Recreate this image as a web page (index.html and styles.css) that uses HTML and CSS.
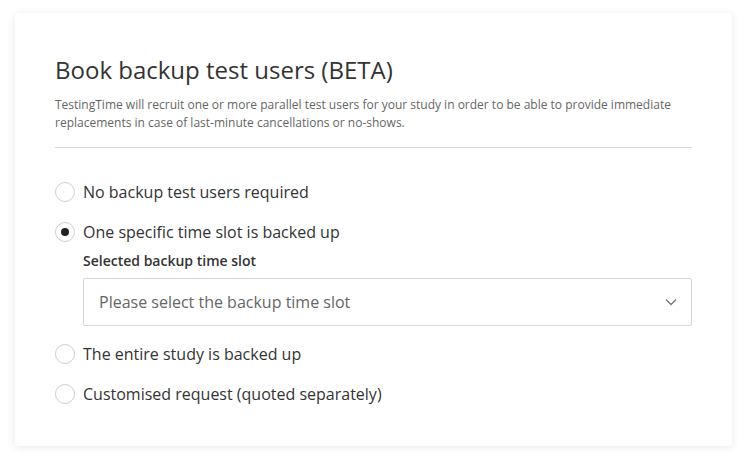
FILE: index.html
```html
<!DOCTYPE html>
<html>
<head>
<meta charset="utf-8">
<link rel="stylesheet" href="styles.css">
</head>
<body>
<div class="card">
  <h1 class="title">Book backup test users (BETA)</h1>
  <p class="desc">TestingTime will recruit one or more parallel test users for your study in order to be able to provide immediate replacements in case of last-minute cancellations or no-shows.</p>
  <hr class="divider">
  <div class="options">
    <label class="option"><span class="radio"></span><span class="label">No backup test users required</span></label>
    <label class="option"><span class="radio checked"></span><span class="label">One specific time slot is backed up</span></label>
    <div class="sub">
      <div class="sub-label">Selected backup time slot</div>
      <div class="select">
        <span class="placeholder">Please select the backup time slot</span>
        <svg class="chev" width="12" height="8" viewBox="0 0 12 8"><path d="M1 1.5 L6 6.5 L11 1.5" fill="none" stroke="#777" stroke-width="1.3"/></svg>
      </div>
    </div>
    <label class="option"><span class="radio"></span><span class="label">The entire study is backed up</span></label>
    <label class="option"><span class="radio"></span><span class="label">Customised request (quoted separately)</span></label>
  </div>
</div>
</body>
</html>
```

FILE: styles.css
```css
html, body { margin: 0; padding: 0; background: #fff; }
body { font-family: "Open Sans", sans-serif; color: #333; padding: 13px 15px 17px 15px; }
.card {
  width: 717px;
  height: 433px;
  box-sizing: border-box;
  background: #fff;
  border-radius: 3px;
  box-shadow: 0 1px 8px rgba(0,0,0,0.09);
  padding: 40px 40px 0 40px;
}
.title { margin: 0; font-size: 24px; font-weight: 400; line-height: 33px; color: #333; }
.desc { margin: 10px 0 0; font-size: 12px; line-height: 18px; color: #666; }
.divider { border: 0; border-top: 1px solid #d8d8d8; margin: 15px 0 0; }
.options { padding-top: 24px; display: flex; flex-direction: column; }
.option { display: flex; align-items: center; height: 40px; gap: 8px; }
.radio { width: 20px; height: 20px; border: 1px solid #cfcfcf; border-radius: 50%; box-sizing: border-box; display: flex; align-items: center; justify-content: center; background: #fff; flex: none; }
.radio.checked::after { content: ""; width: 8px; height: 8px; border-radius: 50%; background: #222; }
.label { font-size: 16px; color: #333; }
.sub { padding-left: 28px; margin-top: 0; margin-bottom: 8px; }
.sub-label { font-size: 14px; font-weight: 600; color: #333; line-height: 18px; margin-bottom: 8px; }
.select { height: 48px; border: 1px solid #d6d6d6; border-radius: 2px; box-sizing: border-box; display: flex; align-items: center; justify-content: space-between; padding: 0 14px 0 15px; }
.placeholder { font-size: 16px; color: #666; }
```
